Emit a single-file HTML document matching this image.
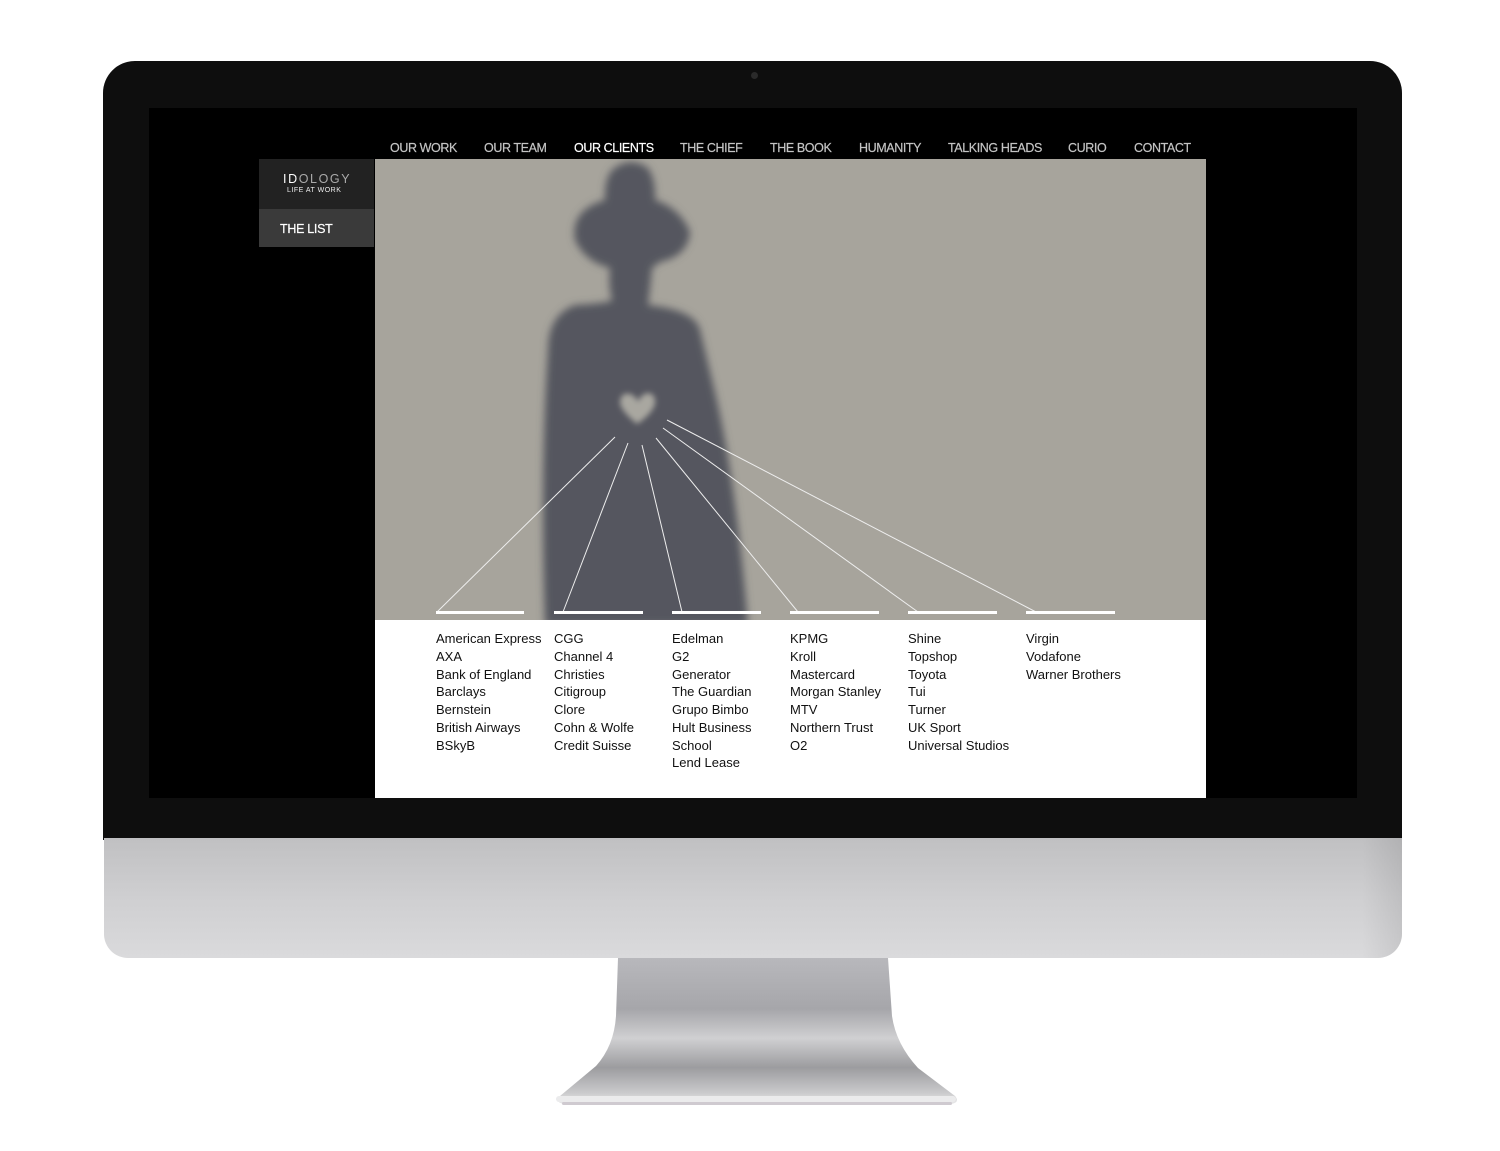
<!DOCTYPE html>
<html><head><meta charset="utf-8"><style>
*{margin:0;padding:0;box-sizing:border-box}
body{width:1500px;height:1151px;background:#fff;position:relative;overflow:hidden;font-family:"Liberation Sans",Arial,sans-serif}
.a{position:absolute}
.bezel{left:103px;top:61px;width:1299px;height:779px;background:#0e0e0e;border-radius:32px 32px 0 0}
.chin{left:104px;top:838px;width:1298px;height:120px;background:linear-gradient(180deg,#c0c0c2 0%,#cfcfd1 50%,#dadadc 100%);border-radius:0 0 24px 24px}
.chin:after{content:"";position:absolute;right:0;top:0;width:40px;height:100%;background:linear-gradient(90deg,rgba(0,0,0,0),rgba(0,0,0,.08));border-radius:0 0 24px 0}
.screen{left:149px;top:108px;width:1208px;height:690px;background:#000}
.nav{top:141px;font-size:12.5px;color:#c4c4c4;letter-spacing:-0.4px;white-space:nowrap;-webkit-text-stroke:0.2px #c4c4c4}
.logo{left:259px;top:159px;width:115px;height:50px;background:#222}
.list{left:259px;top:209px;width:115px;height:38px;background:#3a3a3a;color:#fff;font-size:12.5px;padding:13px 0 0 21px;letter-spacing:-0.3px;-webkit-text-stroke:0.2px #fff}
.white{left:375px;top:620px;width:831px;height:178px;background:#fff}
.col{top:630px;font-size:13px;line-height:17.75px;color:#111;white-space:nowrap}
</style></head><body>
<div class="a bezel"></div>
<div class="a" style="left:751px;top:72px;width:7px;height:7px;border-radius:50%;background:#2a2a2a"></div>
<div class="a chin"></div>
<svg class="a" style="left:540px;top:956px" width="430" height="160" viewBox="0 0 430 160">
<defs><linearGradient id="st" x1="0" y1="0" x2="0" y2="1">
<stop offset="0" stop-color="#b8b8bc"/><stop offset=".35" stop-color="#a6a6aa"/><stop offset=".55" stop-color="#d0d0d2"/><stop offset=".75" stop-color="#9c9c9f"/><stop offset=".92" stop-color="#c9c9cb"/><stop offset="1" stop-color="#e9e9ea"/></linearGradient></defs>
<path d="M78 2 H348 L352 60 Q356 88 378 112 L415 140 Q420 146 412 148 H24 Q14 146 20 140 L56 110 Q74 90 76 60 Z" fill="url(#st)"/>
<rect x="16" y="140" width="400" height="6" rx="3" fill="#ebebec"/>
<rect x="22" y="146" width="390" height="3" rx="1.5" fill="#cfcad0"/>
</svg>
<div class="a screen"></div>
<div class="a nav" style="left:390px">OUR WORK</div>
<div class="a nav" style="left:484px">OUR TEAM</div>
<div class="a nav" style="left:574px;color:#fff;-webkit-text-stroke:0.2px #fff">OUR CLIENTS</div>
<div class="a nav" style="left:680px">THE CHIEF</div>
<div class="a nav" style="left:770px">THE BOOK</div>
<div class="a nav" style="left:859px">HUMANITY</div>
<div class="a nav" style="left:948px">TALKING HEADS</div>
<div class="a nav" style="left:1068px">CURIO</div>
<div class="a nav" style="left:1134px">CONTACT</div>
<div class="a logo"><div style="position:absolute;left:24px;top:13px;font-size:12.5px;letter-spacing:1.6px;color:#aaa"><span style="color:#fff">ID</span>OLOGY</div><div style="position:absolute;left:28px;top:28px;font-size:7px;letter-spacing:.5px;color:#eee">LIFE AT WORK</div></div>
<div class="a list">THE LIST</div>
<svg class="a" style="left:375px;top:159px" width="831" height="461" viewBox="375 159 831 461">
<defs>
<filter id="bl" filterUnits="userSpaceOnUse" x="375" y="159" width="831" height="461"><feGaussianBlur stdDeviation="4"/></filter>
<filter id="bl2" filterUnits="userSpaceOnUse" x="375" y="159" width="831" height="461"><feGaussianBlur stdDeviation="3"/></filter>
</defs>
<rect x="375" y="159" width="831" height="461" fill="#a7a49c"/>
<g fill="#55575e" filter="url(#bl)">
<path d="M612 170 Q630 155 648 168 Q656 180 655 200 Q680 208 690 232 Q688 256 660 262 L652 268 Q650 290 648 305 Q695 310 700 330 L712 380 Q735 470 748 625 L545 625 Q540 470 548 350 Q548 315 575 305 Q610 303 612 300 Q608 285 610 268 Q585 262 575 240 Q570 210 605 200 Q604 180 612 170 Z"/>
</g>
<path d="M637 424 Q620 410 620 402 Q621 392 630 394 Q636 396 638 402 Q641 394 648 393 Q656 394 655 404 Q652 414 637 424 Z" fill="#a9a7a0" filter="url(#bl2)"/>
<g stroke="#eee" stroke-width="1" fill="none">
<line x1="615" y1="437" x2="437" y2="612"/>
<line x1="628" y1="443" x2="563" y2="612"/>
<line x1="642" y1="445" x2="682" y2="612"/>
<line x1="656" y1="438" x2="798" y2="612"/>
<line x1="663" y1="428" x2="918" y2="612"/>
<line x1="667" y1="420" x2="1036" y2="612"/>
</g>
<g fill="#fff">
<rect x="436" y="611" width="88" height="3"/><rect x="554" y="611" width="89" height="3"/><rect x="672" y="611" width="89" height="3"/><rect x="790" y="611" width="89" height="3"/><rect x="908" y="611" width="89" height="3"/><rect x="1026" y="611" width="89" height="3"/>
</g>
</svg>
<div class="a white"></div>
<div class="a col" style="left:436px">American Express<br>AXA<br>Bank of England<br>Barclays<br>Bernstein<br>British Airways<br>BSkyB</div>
<div class="a col" style="left:554px">CGG<br>Channel 4<br>Christies<br>Citigroup<br>Clore<br>Cohn &amp; Wolfe<br>Credit Suisse</div>
<div class="a col" style="left:672px">Edelman<br>G2<br>Generator<br>The Guardian<br>Grupo Bimbo<br>Hult Business<br>School<br>Lend Lease</div>
<div class="a col" style="left:790px">KPMG<br>Kroll<br>Mastercard<br>Morgan Stanley<br>MTV<br>Northern Trust<br>O2</div>
<div class="a col" style="left:908px">Shine<br>Topshop<br>Toyota<br>Tui<br>Turner<br>UK Sport<br>Universal Studios</div>
<div class="a col" style="left:1026px">Virgin<br>Vodafone<br>Warner Brothers</div>
</body></html>
